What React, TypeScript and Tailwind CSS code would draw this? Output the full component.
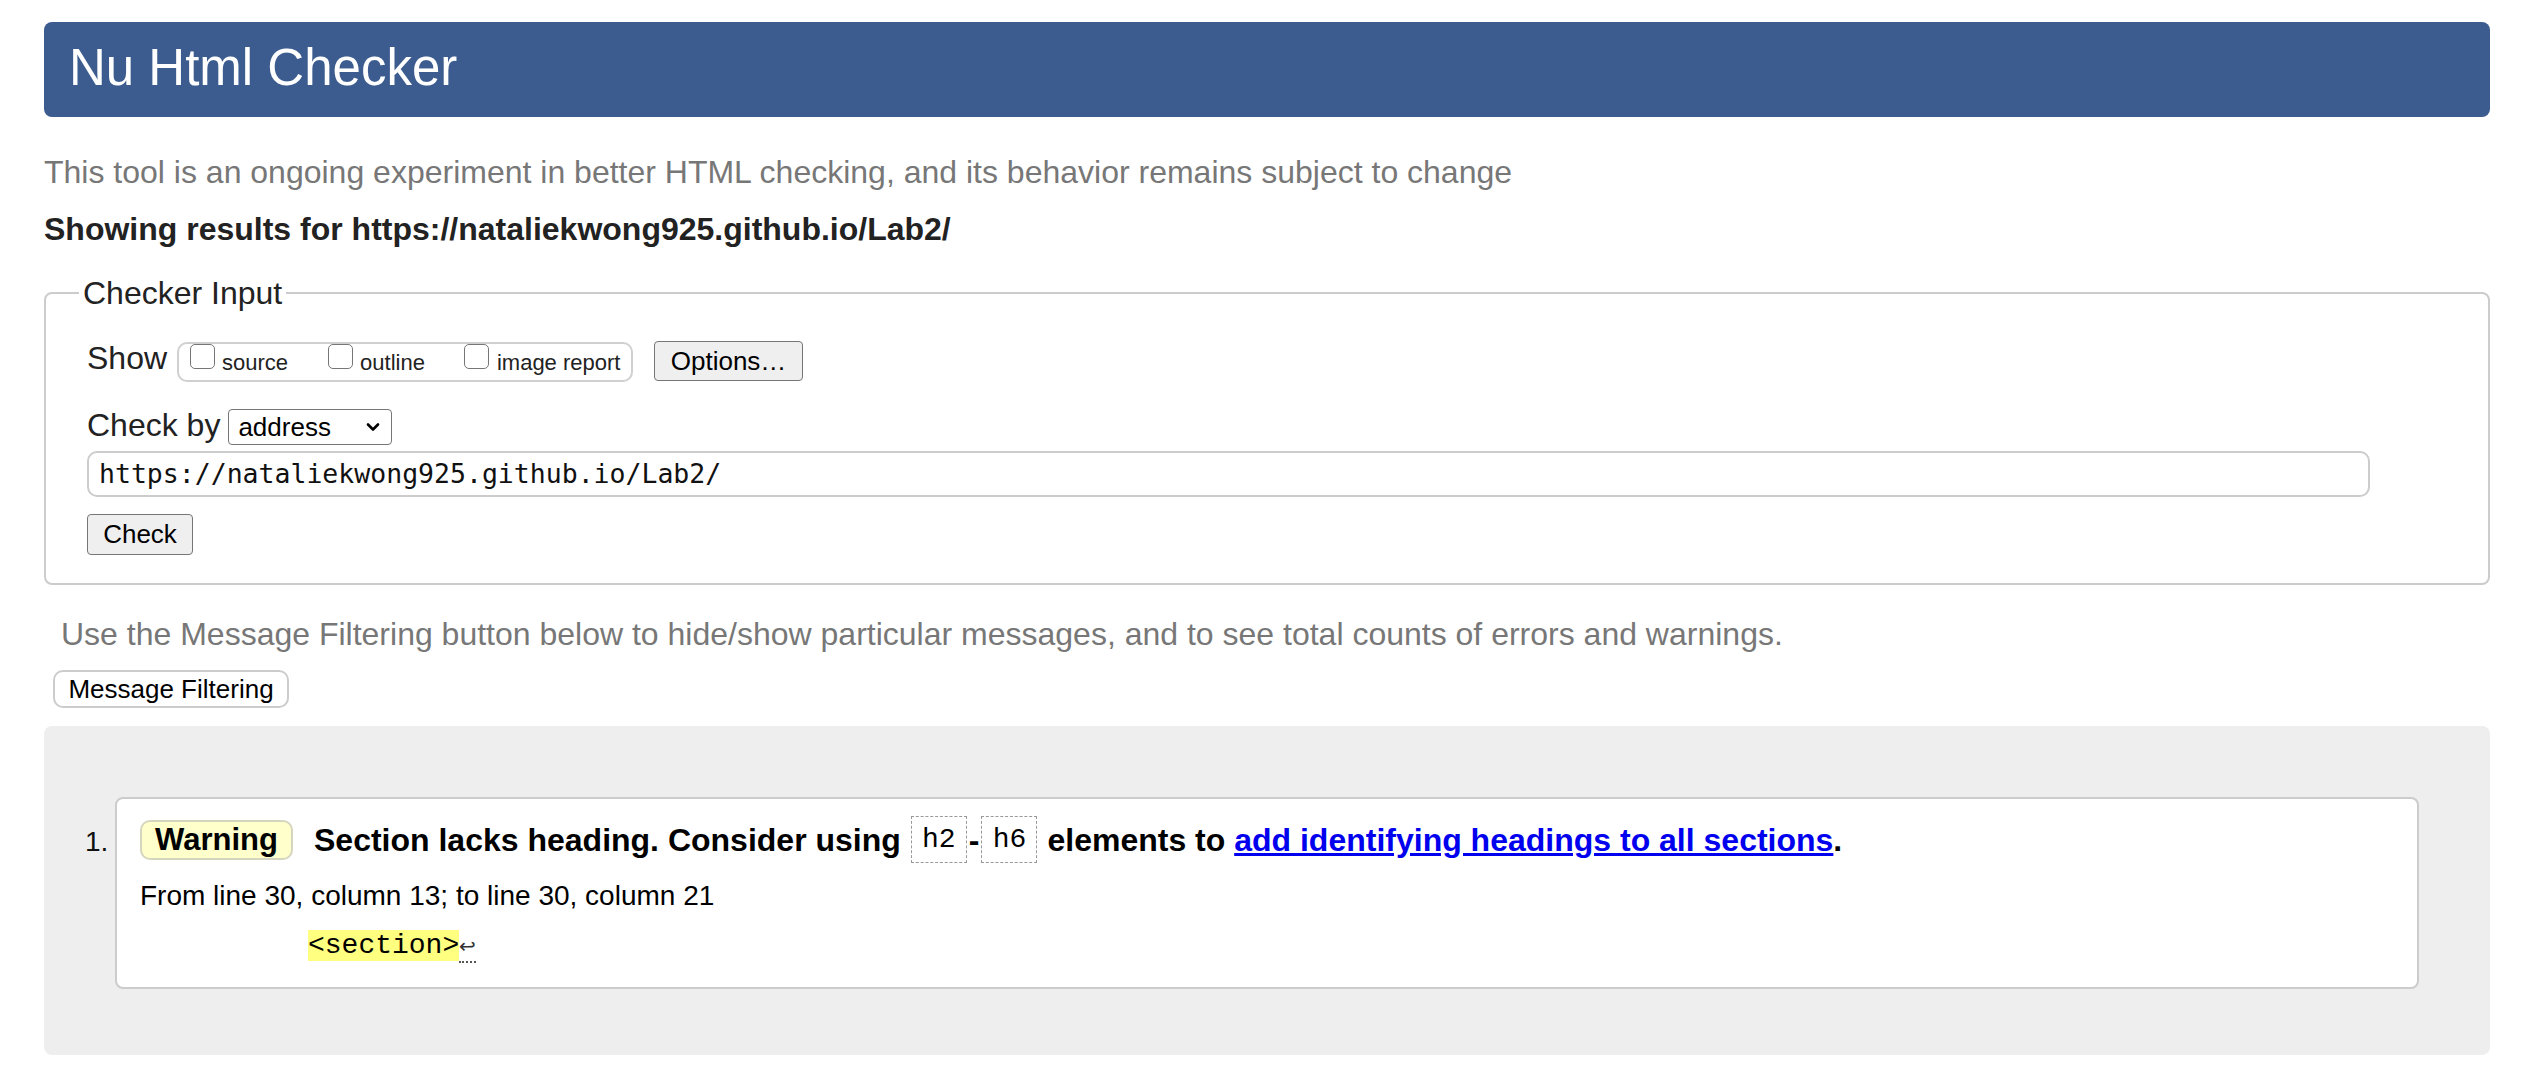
import React from "react";

function Checkbox() {
  return <span className="block w-[25px] h-[25px] border-[1.5px] border-[#767676] rounded-[5px] bg-white shrink-0" />;
}

export default function App() {
  return (
    <div className="min-h-[1084px] bg-white pl-[44px] pr-[50px] pt-[22px] font-['Liberation_Sans',Arial,sans-serif] text-[#222222]">
      <header className="h-[95px] rounded-[8px] bg-[#3c5c8f] pl-[25px] pt-[20px]">
        <h1 className="text-[51px] leading-[51px] text-white font-normal">Nu Html Checker</h1>
      </header>

      <p className="mt-[35px] text-[32px] leading-[40px] text-[#777777]">
        This tool is an ongoing experiment in better HTML checking, and its behavior remains subject to change
      </p>
      <p className="mt-[17px] text-[32px] leading-[40px] font-bold text-[#222222]">
        Showing results for https://nataliekwong925.github.io/Lab2/
      </p>

      <fieldset className="mt-[24px] border-2 border-[#cccccc] rounded-[8px] pl-[41px] pt-[28px] pb-[28px]">
        <legend className="ml-[-8px] px-[4px] text-[32px] leading-[40px]">Checker Input</legend>

        <div className="flex items-start h-[41px]">
          <span className="text-[32px] leading-[34px]">Show</span>
          <div className="ml-[10px] mt-[1px] h-[40px] w-[456px] border-2 border-[#d0d0d0] rounded-[10px] flex items-start pl-[11px]">
            <Checkbox />
            <span className="ml-[7px] text-[22px] leading-[37px]">source</span>
            <span className="ml-[40px]"><Checkbox /></span>
            <span className="ml-[7px] text-[22px] leading-[37px]">outline</span>
            <span className="ml-[39px]"><Checkbox /></span>
            <span className="ml-[8px] text-[22px] leading-[37px]">image report</span>
          </div>
          <div className="ml-[21px] h-[40px] w-[149px] bg-[#efefef] border border-[#767676] rounded-[4px] flex items-center justify-center text-[26px] text-black">
            Options…
          </div>
        </div>

        <div className="mt-[27px] flex items-start">
          <span className="text-[32px] leading-[32px]">Check by</span>
          <div className="ml-[8px] h-[36px] w-[164px] border border-[#767676] rounded-[4px] bg-white flex items-center pl-[9px] pr-[8px] text-[26px] text-black">
            <span className="flex-1 leading-[30px]">address</span>
            <svg width="14" height="10" viewBox="0 0 14 10" className="mr-[3px]">
              <path d="M2 2.5 L7 7.5 L12 2.5" fill="none" stroke="#000" strokeWidth="2.6" strokeLinecap="round" strokeLinejoin="round" />
            </svg>
          </div>
        </div>

        <div className="mt-[6px] h-[46px] w-[2283px] border-2 border-[#cccccc] rounded-[10px] bg-white flex items-center pl-[10px]">
          <span className="font-['DejaVu_Sans_Mono',monospace] text-[26.5px] leading-[34px] text-[#111111]">
            https://nataliekwong925.github.io/Lab2/
          </span>
        </div>

        <div className="mt-[17px] h-[41px] w-[106px] bg-[#efefef] border border-[#767676] rounded-[4px] flex items-center justify-center text-[26px] text-black">
          Check
        </div>
      </fieldset>

      <p className="mt-[29px] pl-[17px] text-[32px] leading-[40px] text-[#777777]">
        Use the Message Filtering button below to hide/show particular messages, and to see total counts of errors and warnings.
      </p>
      <div className="mt-[16px] ml-[9px] h-[38px] w-[236px] bg-white border-2 border-[#cccccc] rounded-[10px] flex items-center justify-center text-[26px] text-black">
        Message Filtering
      </div>

      <div className="mt-[18px] rounded-[8px] bg-[#eeeeee] pt-[71px] pb-[66px] pl-[41px] pr-[71px] flex items-start">
        <div className="w-[30px] mt-[27px] text-[28px] leading-[36px] text-[#111111]">1.</div>
        <div className="flex-1 border-2 border-[#cccccc] rounded-[8px] bg-white pt-[17px] pl-[23px] pb-[24px] text-black">
          <div className="flex items-center h-[47px]">
            <span className="h-[40px] w-[153px] bg-[#ffffcc] border-2 border-[#d6d6c0] rounded-[10px] flex items-center justify-center text-[31px] font-bold leading-[36px]">
              Warning
            </span>
            <span className="ml-[21px] text-[32px] font-bold leading-[40px]">Section lacks heading. Consider using</span>
            <span className="ml-[10px] h-[47px] w-[56px] border border-dashed border-[#999999] flex items-center justify-center font-['Liberation_Mono',monospace] text-[28px]">h2</span>
            <span className="mx-[2px] text-[32px] font-bold leading-[40px]">-</span>
            <span className="h-[47px] w-[56px] border border-dashed border-[#999999] flex items-center justify-center font-['Liberation_Mono',monospace] text-[28px]">h6</span>
            <span className="ml-[10px] text-[32px] font-bold leading-[40px] whitespace-pre">elements to </span>
            <a className="text-[32px] font-bold leading-[40px] text-[#0000ee] underline">add identifying headings to all sections</a>
            <span className="text-[32px] font-bold leading-[40px]">.</span>
          </div>
          <div className="mt-[15px] text-[28px] leading-[36px]">From line 30, column 13; to line 30, column 21</div>
          <div className="mt-[16px] pl-[168px] flex items-start">
            <code className="h-[31px] bg-[#ffff80] font-['Liberation_Mono',monospace] text-[28px] leading-[31px] text-black">&lt;section&gt;</code>
            <span className="text-[20px] leading-[28px] text-[#333333] border-b-2 border-dotted border-[#555555] h-[33px] pt-[2px]">↩</span>
          </div>
        </div>
      </div>
    </div>
  );
}
